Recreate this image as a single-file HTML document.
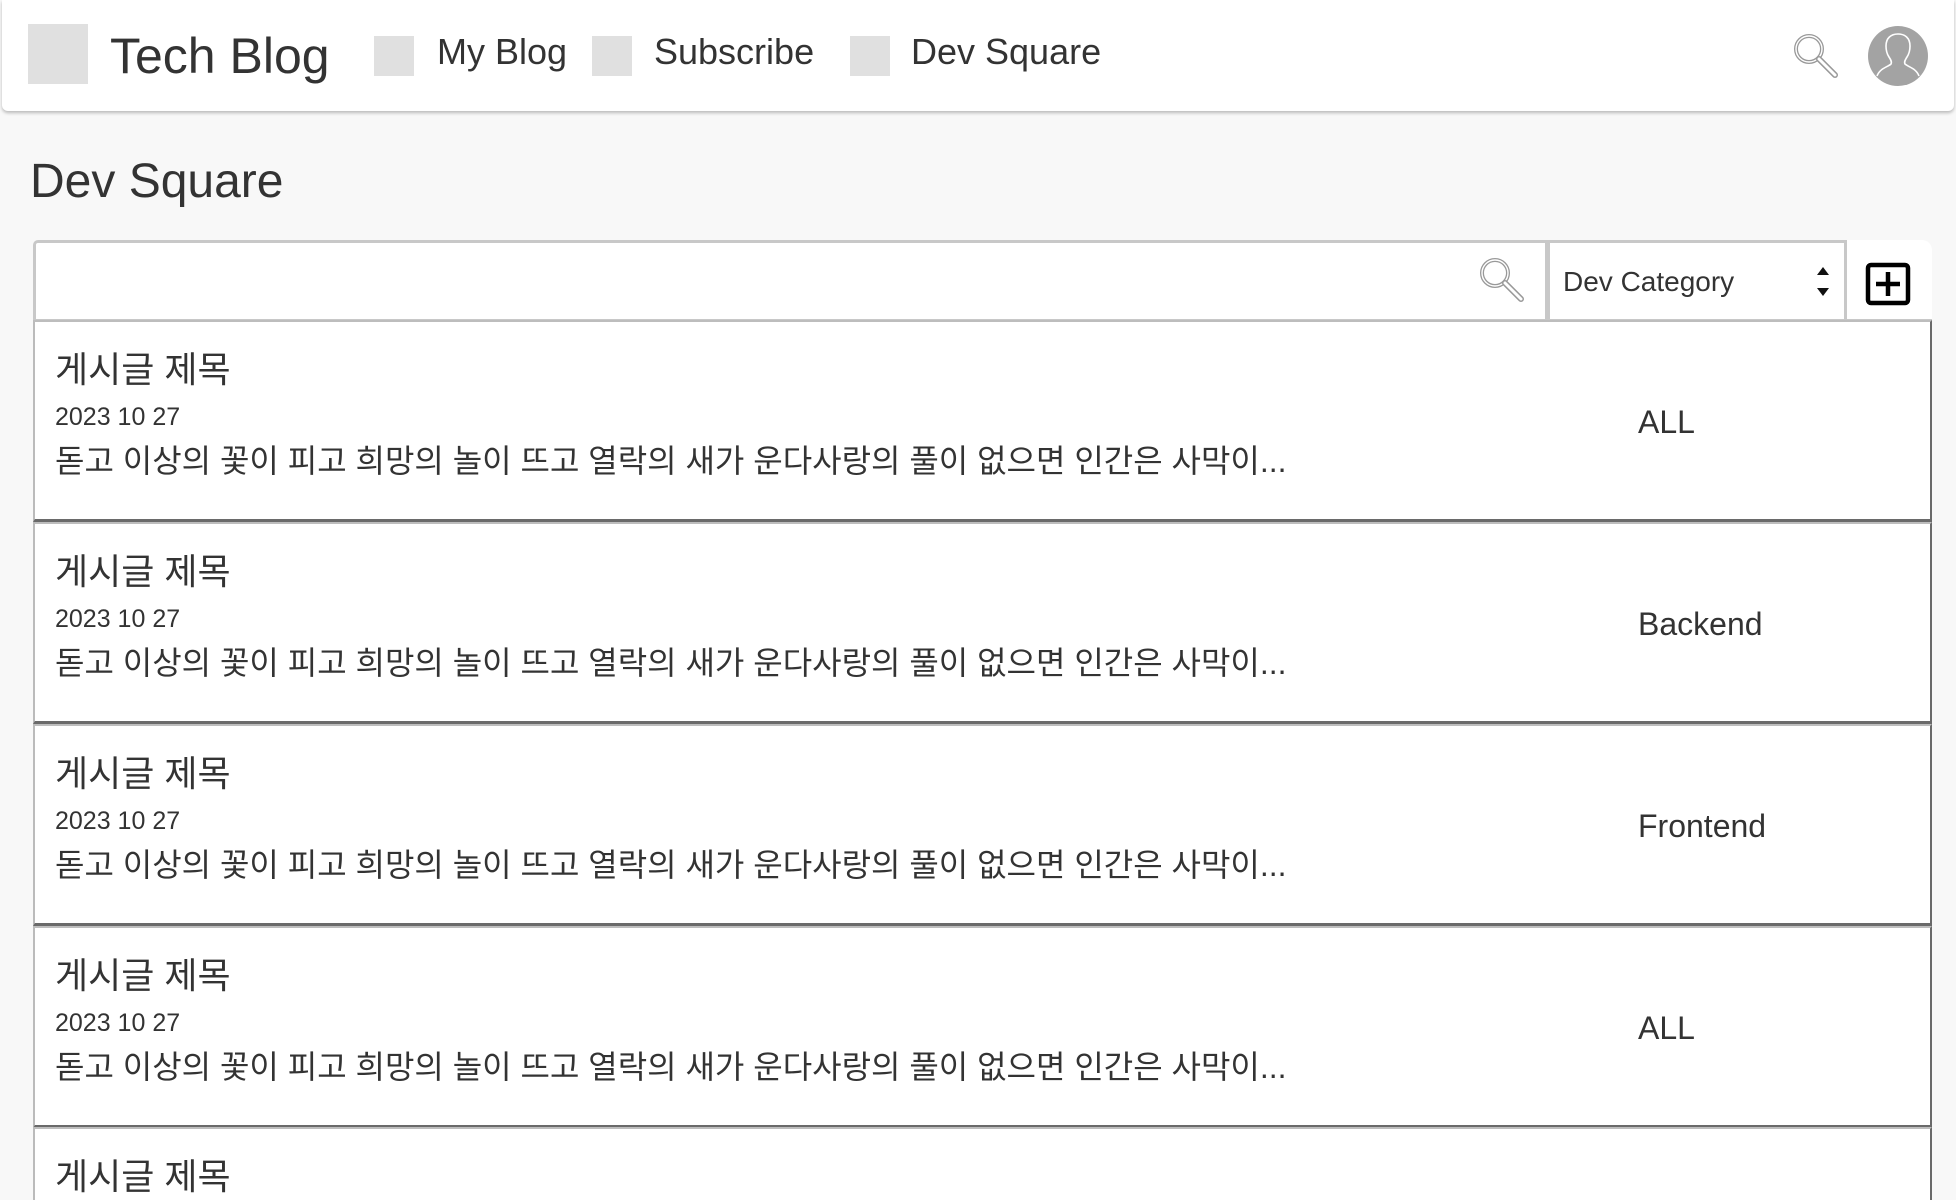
<!DOCTYPE html>
<html><head><meta charset="utf-8">
<style>
*{margin:0;padding:0;box-sizing:border-box}
html,body{width:1956px;height:1200px;overflow:hidden}
body{background:#f8f8f8;position:relative;font-family:"Liberation Sans","Noto Sans CJK KR",sans-serif;color:#333}
.a{position:absolute;line-height:1;white-space:nowrap}
.hdr{position:absolute;left:2px;top:0;width:1952px;height:111px;background:#fff;border-radius:0 0 6px 6px;box-shadow:0 2px 3px rgba(0,0,0,.25)}
.sq{position:absolute;background:#e0e0e0}
.row{position:absolute;left:33px;width:1899px;height:202px;background:#fff;border-top:2px solid #bdbdbd;border-bottom:3px solid #6a6a6a;border-left:2px solid #bbb;border-right:2px solid #6a6a6a}
.row .t{position:absolute;left:20px;top:30px;font-size:36px;line-height:1;white-space:nowrap}
.row .d{position:absolute;left:20px;top:83px;font-size:25px;line-height:1}
.row .b{position:absolute;left:20px;top:123px;font-size:32px;line-height:1;white-space:nowrap}
.row .c{position:absolute;left:1603px;top:84px;font-size:32px;line-height:1}
</style></head><body>
<div class="hdr"></div>
<div class="sq" style="left:28px;top:24px;width:60px;height:60px"></div>
<div class="a" style="left:110px;top:31px;font-size:50px">Tech Blog</div>
<div class="sq" style="left:374px;top:36px;width:40px;height:40px"></div>
<div class="a" style="left:437px;top:34px;font-size:36px">My Blog</div>
<div class="sq" style="left:592px;top:36px;width:40px;height:40px"></div>
<div class="a" style="left:654px;top:34px;font-size:36px">Subscribe</div>
<div class="sq" style="left:850px;top:36px;width:40px;height:40px"></div>
<div class="a" style="left:911px;top:34px;font-size:36px">Dev Square</div>
<svg class="a" style="left:1790px;top:30px" width="56" height="56" viewBox="0 0 56 56">
<circle cx="19" cy="19" r="13" fill="none" stroke="#999" stroke-width="4"/>
<circle cx="19" cy="19" r="13" fill="none" stroke="#fff" stroke-width="1.4"/>
<line x1="29" y1="29" x2="45" y2="45" stroke="#999" stroke-width="6" stroke-linecap="round"/>
<line x1="29" y1="29" x2="45" y2="45" stroke="#fff" stroke-width="3" stroke-linecap="round"/>
</svg>
<svg class="a" style="left:1868px;top:26px" width="60" height="60" viewBox="0 0 60 60">
<circle cx="30" cy="30" r="30" fill="#a3a3a3"/>
<path d="M9 50 C12 42 20 41 23 38 C24 36 23 34 21 31 C19 28 18 24 18 20 C18 12 23 8 30 8 C37 8 42 12 42 20 C42 24 41 28 39 31 C37 34 36 36 37 38 C40 41 48 42 51 50" fill="none" stroke="#fff" stroke-width="1.6"/>
</svg>
<div class="a" style="left:30px;top:158px;font-size:48px">Dev Square</div>
<div style="position:absolute;left:33px;top:240px;width:1515px;height:82px;background:#fff;border:3px solid #c8c8c8;border-radius:5px 0 0 0"></div>
<div style="position:absolute;left:1547px;top:240px;width:300px;height:82px;background:#fff;border:3px solid #c8c8c8"></div>
<div style="position:absolute;left:1847px;top:240px;width:85px;height:82px;background:#fff;border-radius:0 10px 0 0;border-bottom:3px solid #c8c8c8"></div>
<svg class="a" style="left:1476px;top:254px" width="56" height="56" viewBox="0 0 56 56">
<circle cx="19" cy="19" r="13" fill="none" stroke="#999" stroke-width="4"/>
<circle cx="19" cy="19" r="13" fill="none" stroke="#fff" stroke-width="1.4"/>
<line x1="29" y1="29" x2="45" y2="45" stroke="#999" stroke-width="6" stroke-linecap="round"/>
<line x1="29" y1="29" x2="45" y2="45" stroke="#fff" stroke-width="3" stroke-linecap="round"/>
</svg>
<div class="a" style="left:1563px;top:268px;font-size:28px">Dev Category</div>
<svg class="a" style="left:1816px;top:264px" width="14" height="36" viewBox="0 0 14 36">
<path d="M7 3 L13 11 L1 11 Z M1 24 L13 24 L7 32 Z" fill="#111"/>
</svg>
<svg class="a" style="left:1864px;top:261px" width="48" height="46" viewBox="0 0 48 46">
<rect x="4" y="4" width="40" height="38" rx="3" fill="none" stroke="#000" stroke-width="4.5"/>
<path d="M24 11 V35 M12 23 H36" stroke="#000" stroke-width="4.5"/>
</svg>

<div class="row" style="top:320px"><div class="t">게시글 제목</div><div class="d">2023 10 27</div><div class="b">돋고 이상의 꽃이 피고 희망의 놀이 뜨고 열락의 새가 운다사랑의 풀이 없으면 인간은 사막이...</div><div class="c">ALL</div></div>
<div class="row" style="top:522px"><div class="t">게시글 제목</div><div class="d">2023 10 27</div><div class="b">돋고 이상의 꽃이 피고 희망의 놀이 뜨고 열락의 새가 운다사랑의 풀이 없으면 인간은 사막이...</div><div class="c">Backend</div></div>
<div class="row" style="top:724px"><div class="t">게시글 제목</div><div class="d">2023 10 27</div><div class="b">돋고 이상의 꽃이 피고 희망의 놀이 뜨고 열락의 새가 운다사랑의 풀이 없으면 인간은 사막이...</div><div class="c">Frontend</div></div>
<div class="row" style="top:926px"><div class="t">게시글 제목</div><div class="d">2023 10 27</div><div class="b">돋고 이상의 꽃이 피고 희망의 놀이 뜨고 열락의 새가 운다사랑의 풀이 없으면 인간은 사막이...</div><div class="c">ALL</div></div>
<div class="row" style="top:1127px;height:73px;border-bottom:none"><div class="t">게시글 제목</div></div>
</body></html>
